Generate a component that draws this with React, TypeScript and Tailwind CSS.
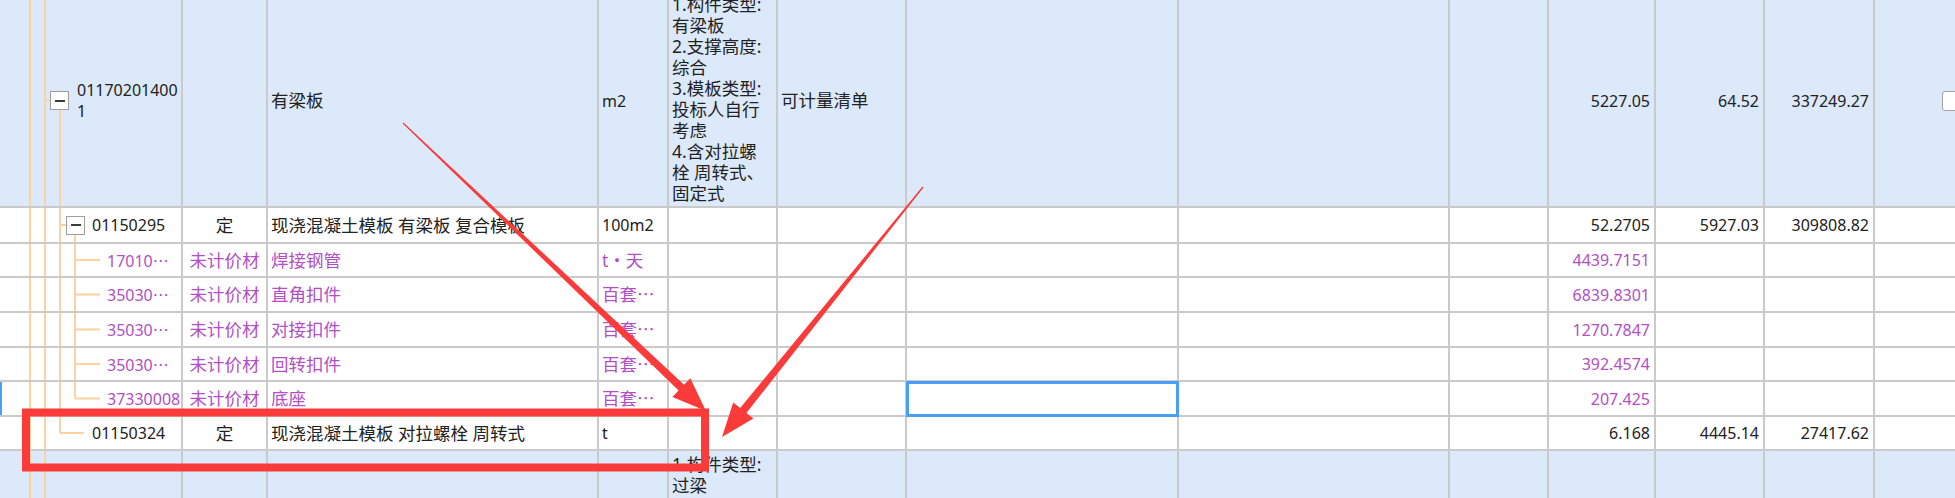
import type { ReactNode } from "react";

const WIDTHS = [
  "w-[183px]",
  "w-[85px]",
  "w-[331px]",
  "w-[70px]",
  "w-[109px]",
  "w-[129px]",
  "w-[272px]",
  "w-[271px]",
  "w-[99px]",
  "w-[107px]",
  "w-[109px]",
  "w-[110px]",
];

type Seg = [number, string, number, string];

const full = (x: number): Seg => [x, "0%", x, "100%"];
const upper = (x: number): Seg => [x, "0%", x, "50%"];
const lower = (x: number): Seg => [x, "50%", x, "100%"];
const branch = (x1: number, x2: number): Seg => [x1, "50%", x2, "50%"];

function Guides({ segs }: { segs: Seg[] }) {
  return (
    <svg className="pointer-events-none absolute inset-0 h-full w-full" aria-hidden>
      {segs.map(([x1, y1, x2, y2], i) => (
        <line key={i} x1={x1} y1={y1} x2={x2} y2={y2} stroke="#fcd3a0" strokeWidth={2} />
      ))}
    </svg>
  );
}

function Expander() {
  return (
    <span className="relative flex h-[19px] w-[19px] shrink-0 items-center justify-center border-[1.5px] border-[#9d9d9d] bg-white">
      <span className="h-[2px] w-[10px] bg-[#3a3a3a]" />
    </span>
  );
}

function Cell({ i, className = "", children }: { i: number; className?: string; children?: ReactNode }) {
  const w = i < 12 ? `${WIDTHS[i]} shrink-0 border-r-2 border-[#cacaca]` : "min-w-0 flex-1";
  return <div className={`relative flex h-full items-center ${w} ${className}`}>{children}</div>;
}

const Dots = () => <span className="font-['Noto_Sans_CJK_SC',sans-serif]">…</span>;

type RowData = {
  h: string;
  segs: Seg[];
  lead: string;
  box?: boolean;
  code: ReactNode;
  type?: string;
  name?: string;
  unit?: ReactNode;
  qty?: string;
  price?: string;
  total?: string;
  purple?: boolean;
  selected?: boolean;
};

const SETS = (
  <>
    百套
    <Dots />
  </>
);

const ROWS: RowData[] = [
  {
    h: "h-[36px]",
    segs: [full(30), full(45), full(60), branch(60, 66), lower(75)],
    lead: "pl-[66px] gap-[7px]",
    box: true,
    code: "01150295",
    type: "定",
    name: "现浇混凝土模板 有梁板 复合模板",
    unit: <span className="text-[16px]">100m2</span>,
    qty: "52.2705",
    price: "5927.03",
    total: "309808.82",
  },
  {
    h: "h-[34px]",
    segs: [full(30), full(45), full(60), full(75), branch(75, 100)],
    lead: "pl-[107px]",
    code: (
      <>
        17010
        <Dots />
      </>
    ),
    type: "未计价材",
    name: "焊接钢管",
    unit: (
      <>
        t<span className="font-['Noto_Sans_CJK_SC',sans-serif]">・</span>天
      </>
    ),
    qty: "4439.7151",
    purple: true,
  },
  {
    h: "h-[35px]",
    segs: [full(30), full(45), full(60), full(75), branch(75, 100)],
    lead: "pl-[107px]",
    code: (
      <>
        35030
        <Dots />
      </>
    ),
    type: "未计价材",
    name: "直角扣件",
    unit: SETS,
    qty: "6839.8301",
    purple: true,
  },
  {
    h: "h-[35px]",
    segs: [full(30), full(45), full(60), full(75), branch(75, 100)],
    lead: "pl-[107px]",
    code: (
      <>
        35030
        <Dots />
      </>
    ),
    type: "未计价材",
    name: "对接扣件",
    unit: SETS,
    qty: "1270.7847",
    purple: true,
  },
  {
    h: "h-[34px]",
    segs: [full(30), full(45), full(60), full(75), branch(75, 100)],
    lead: "pl-[107px]",
    code: (
      <>
        35030
        <Dots />
      </>
    ),
    type: "未计价材",
    name: "回转扣件",
    unit: SETS,
    qty: "392.4574",
    purple: true,
  },
  {
    h: "h-[35px]",
    segs: [full(30), full(45), full(60), upper(75), branch(75, 100)],
    lead: "pl-[107px]",
    code: "37330008",
    type: "未计价材",
    name: "底座",
    unit: SETS,
    qty: "207.425",
    purple: true,
    selected: true,
  },
  {
    h: "h-[34px]",
    segs: [full(30), full(45), upper(60), branch(60, 84)],
    lead: "pl-[92px]",
    code: "01150324",
    type: "定",
    name: "现浇混凝土模板 对拉螺栓 周转式",
    unit: <span className="text-[16px]">t</span>,
    qty: "6.168",
    price: "4445.14",
    total: "27417.62",
  },
];

const TOP_DESC = [
  "1.构件类型:",
  "有梁板",
  "2.支撑高度:",
  "综合",
  "3.模板类型:",
  "投标人自行",
  "考虑",
  "4.含对拉螺",
  "栓 周转式、",
  "固定式",
];

function arrow(sx: number, sy: number, tx: number, ty: number) {
  const head = 34;
  const headHalf = 13;
  const shaftHalf = 4;
  const tail = 0.6;
  const len = Math.hypot(tx - sx, ty - sy);
  const ux = (tx - sx) / len;
  const uy = (ty - sy) / len;
  const nx = -uy;
  const ny = ux;
  const bx = tx - ux * head;
  const by = ty - uy * head;
  const p = (x: number, y: number) => `${x.toFixed(1)},${y.toFixed(1)}`;
  return [
    p(sx + nx * tail, sy + ny * tail),
    p(bx + nx * shaftHalf, by + ny * shaftHalf),
    p(bx + nx * headHalf, by + ny * headHalf),
    p(tx, ty),
    p(bx - nx * headHalf, by - ny * headHalf),
    p(bx - nx * shaftHalf, by - ny * shaftHalf),
    p(sx - nx * tail, sy - ny * tail),
  ].join(" ");
}

export default function App() {
  return (
    <div className="relative h-[498px] w-[1955px] overflow-hidden bg-white font-['Noto_Sans','Noto_Sans_CJK_SC',sans-serif] text-[#222]">
      <div className="flex flex-col">
        {/* bill item row */}
        <div className="-mt-[5px] flex h-[213px] shrink-0 border-b-2 border-[#cacaca] bg-[#dce9fb]">
          <Cell i={0} className="gap-[8px] pl-[50px]">
            <Guides segs={[full(30), full(45), branch(45, 50), lower(60)]} />
            <Expander />
            <span className="relative text-[16px] leading-[21px]">
              01170201400
              <br />1
            </span>
          </Cell>
          <Cell i={1} />
          <Cell i={2} className="pl-[3px] text-[17.5px]">
            有梁板
          </Cell>
          <Cell i={3} className="pl-[3px] text-[16px]">
            m2
          </Cell>
          <Cell i={4} className="pl-[3px] text-[17.5px] leading-[21px]">
            <div className="-mt-[3px] whitespace-nowrap">
              {TOP_DESC.map((l) => (
                <div key={l}>{l}</div>
              ))}
            </div>
          </Cell>
          <Cell i={5} className="pl-[3px] text-[17.5px]">
            可计量清单
          </Cell>
          <Cell i={6} />
          <Cell i={7} />
          <Cell i={8} />
          <Cell i={9} className="justify-end pr-[4px] text-[16px]">
            5227.05
          </Cell>
          <Cell i={10} className="justify-end pr-[4px] text-[16px]">
            64.52
          </Cell>
          <Cell i={11} className="justify-end pr-[4px] text-[16px]">
            337249.27
          </Cell>
          <Cell i={12} className="pl-[67px]">
            <span className="h-[20px] w-[20px] shrink-0 rounded-[3px] border-[1.5px] border-[#a3a3a3] bg-white" />
          </Cell>
        </div>

        {ROWS.map((r, idx) => {
          const tone = r.purple ? "text-[#b24fc6]" : "text-[#222]";
          return (
            <div key={idx} className={`flex shrink-0 border-b-2 border-[#cacaca] bg-white ${r.h} ${tone}`}>
              <Cell
                i={0}
                className={`${r.lead} ${r.selected ? "shadow-[inset_2px_0_0_#4a9ef5]" : ""}`}
              >
                <Guides segs={r.segs} />
                {r.box && <Expander />}
                <span className="relative whitespace-nowrap text-[16px]">{r.code}</span>
              </Cell>
              <Cell i={1} className="justify-center text-[17.5px]">
                {r.type}
              </Cell>
              <Cell i={2} className="whitespace-nowrap pl-[3px] text-[17.5px]">
                {r.name}
              </Cell>
              <Cell i={3} className="whitespace-nowrap pl-[3px] text-[17.5px]">
                {r.unit}
              </Cell>
              <Cell i={4} />
              <Cell i={5} />
              <Cell i={6}>
                {r.selected && (
                  <span className="absolute top-[-1px] right-[-2px] bottom-[-2px] left-[-1px] border-[3px] border-[#4a9ef5]" />
                )}
              </Cell>
              <Cell i={7} />
              <Cell i={8} />
              <Cell i={9} className="justify-end pr-[4px] text-[16px]">
                {r.qty}
              </Cell>
              <Cell i={10} className="justify-end pr-[4px] text-[16px]">
                {r.price}
              </Cell>
              <Cell i={11} className="justify-end pr-[4px] text-[16px]">
                {r.total}
              </Cell>
              <Cell i={12} />
            </div>
          );
        })}

        {/* next bill item, cut off by the viewport */}
        <div className="flex h-[240px] shrink-0 bg-[#dce9fb]">
          <Cell i={0}>
            <Guides segs={[full(30), full(45)]} />
          </Cell>
          <Cell i={1} />
          <Cell i={2} />
          <Cell i={3} />
          <Cell i={4} className="items-start pt-[3px] pl-[3px] text-[17.5px] leading-[21px]">
            <div className="whitespace-nowrap">
              <div>1.构件类型:</div>
              <div>过梁</div>
              <div>2.支撑高度:</div>
              <div>综合</div>
            </div>
          </Cell>
          <Cell i={5} />
          <Cell i={6} />
          <Cell i={7} />
          <Cell i={8} />
          <Cell i={9} />
          <Cell i={10} />
          <Cell i={11} />
          <Cell i={12} />
        </div>
      </div>

      {/* red annotation marks */}
      <svg className="pointer-events-none absolute inset-0" width={1955} height={498} aria-hidden>
        <rect x={26} y={412.5} width={679} height={55} fill="none" stroke="#fb3a3a" strokeWidth={8} />
        <polygon points={arrow(403, 123, 706, 411)} fill="#fb3a3a" />
        <polygon points={arrow(923, 187, 722, 437)} fill="#fb3a3a" />
      </svg>
    </div>
  );
}
